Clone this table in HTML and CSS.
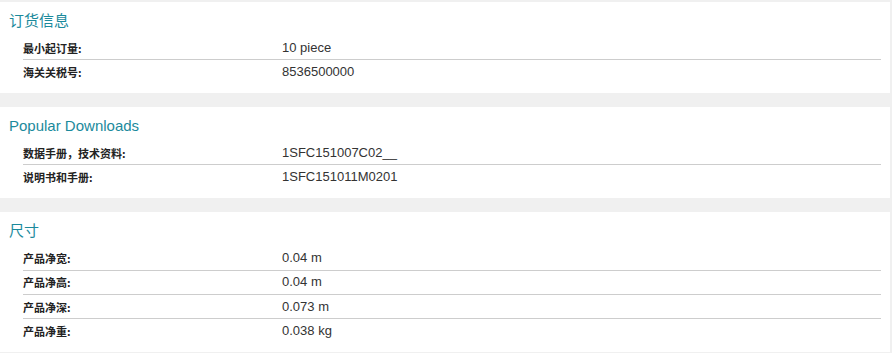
FILE: index.html
```html
<!DOCTYPE html>
<html lang="zh-CN">
<head>
<meta charset="utf-8">
<title>订货信息</title>
<link rel="stylesheet" href="styles.css">
</head>
<body>
<div class="page">
  <section class="panel">
    <h2 class="panel-title">订货信息</h2>
    <div class="rows">
      <div class="row"><div class="label">最小起订量:</div><div class="value">10 piece</div></div>
      <div class="row"><div class="label">海关关税号:</div><div class="value">8536500000</div></div>
    </div>
  </section>
  <section class="panel">
    <h2 class="panel-title">Popular Downloads</h2>
    <div class="rows">
      <div class="row"><div class="label">数据手册，技术资料:</div><div class="value">1SFC151007C02__</div></div>
      <div class="row"><div class="label">说明书和手册:</div><div class="value">1SFC151011M0201</div></div>
    </div>
  </section>
  <section class="panel">
    <h2 class="panel-title">尺寸</h2>
    <div class="rows">
      <div class="row"><div class="label">产品净宽:</div><div class="value">0.04 m</div></div>
      <div class="row"><div class="label">产品净高:</div><div class="value">0.04 m</div></div>
      <div class="row"><div class="label">产品净深:</div><div class="value">0.073 m</div></div>
      <div class="row"><div class="label">产品净重:</div><div class="value">0.038 kg</div></div>
    </div>
  </section>
</div>
</body>
</html>
```
FILE: styles.css
```css
html, body {
  margin: 0;
  padding: 0;
  background: #f0f0f0;
}
body {
  font-family: "Liberation Sans", "Noto Sans CJK SC", Arial, sans-serif;
  color: #333;
}
.page {
  padding-top: 2px;
  width: 890px;
  display: flex;
  flex-direction: column;
  gap: 14px;
}
.panel {
  background: #ffffff;
  padding: 9px 9px 9.3px 0;
}
.panel-title {
  margin: 0 0 5px 0;
  padding-left: 9px;
  font-size: 15px;
  line-height: 20px;
  font-weight: normal;
  color: #1b8a9c;
}
.rows {
  margin-left: 23px;
}
.row {
  display: flex;
  align-items: center;
  height: 23.4px;
}
.row + .row {
  border-top: 1px solid #cdcdcd;
}
.label {
  width: 259px;
  flex: none;
  font-family: "Noto Sans CJK SC", "Liberation Sans", sans-serif;
  font-size: 11px;
  font-weight: bold;
  color: #222;
  line-height: 14px;
}
.value {
  font-size: 13px;
  line-height: 16px;
  color: #333;
}
```
